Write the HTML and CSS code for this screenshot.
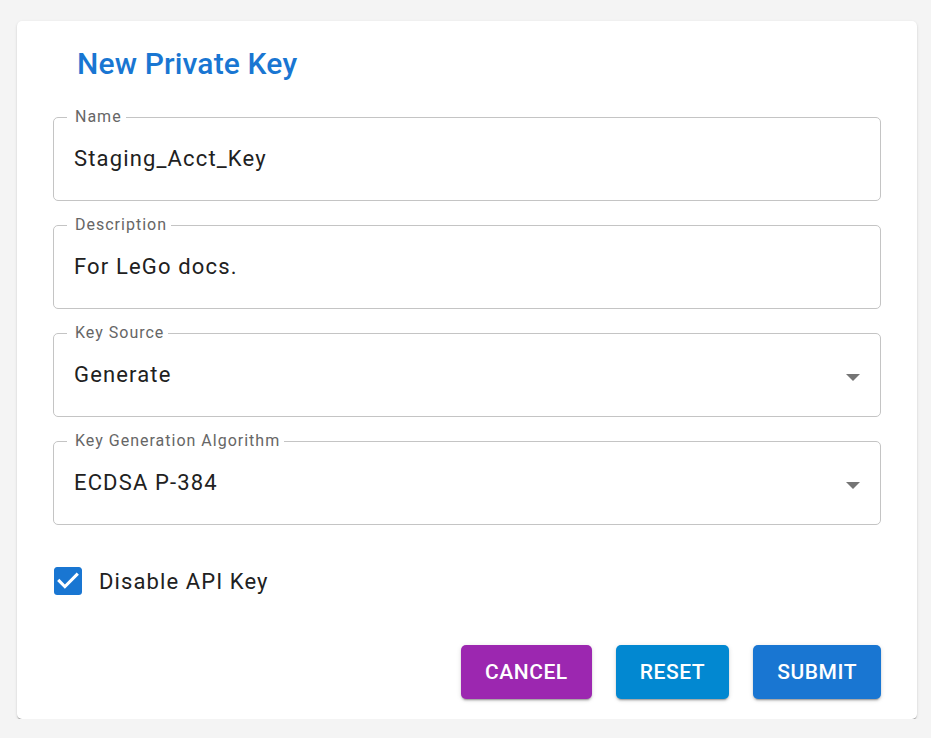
FILE: index.html
```html
<!DOCTYPE html>
<html lang="en">
<head>
<meta charset="utf-8">
<title>New Private Key</title>
<link rel="stylesheet" href="styles.css">
</head>
<body>
<div class="page">
  <form class="card">
    <h2 class="title">New Private Key</h2>
    <div class="fields">
      <fieldset class="field">
        <legend class="label">Name</legend>
        <div class="control"><span class="value">Staging_Acct_Key</span></div>
      </fieldset>
      <fieldset class="field">
        <legend class="label">Description</legend>
        <div class="control"><span class="value">For LeGo docs.</span></div>
      </fieldset>
      <fieldset class="field">
        <legend class="label">Key Source</legend>
        <div class="control"><span class="value">Generate</span>
          <svg class="arrow" viewBox="7 10 10 5" width="14" height="7"><path d="M7 10l5 5 5-5z"/></svg>
        </div>
      </fieldset>
      <fieldset class="field">
        <legend class="label">Key Generation Algorithm</legend>
        <div class="control"><span class="value">ECDSA P-384</span>
          <svg class="arrow" viewBox="7 10 10 5" width="14" height="7"><path d="M7 10l5 5 5-5z"/></svg>
        </div>
      </fieldset>
    </div>
    <label class="check-row">
      <span class="checkbox">
        <svg viewBox="3 3 18 18" width="28" height="28"><path d="M19 3H5c-1.11 0-2 .9-2 2v14c0 1.1.89 2 2 2h14c1.11 0 2-.9 2-2V5c0-1.1-.89-2-2-2zm-9 14l-5-5 1.41-1.41L10 14.17l7.59-7.59L19 8l-9 9z"/></svg>
      </span>
      <span class="check-label">Disable API Key</span>
    </label>
    <div class="actions">
      <button type="button" class="btn btn-cancel">Cancel</button>
      <button type="button" class="btn btn-reset">Reset</button>
      <button type="button" class="btn btn-submit">Submit</button>
    </div>
  </form>
</div>
</body>
</html>
```
FILE: styles.css
```css
html, body {
  margin: 0;
  padding: 0;
  background: #f4f4f4;
  font-family: Roboto, "Liberation Sans", sans-serif;
}
.page {
  padding: 21px 14px 0 17px;
}
.card {
  background: #fff;
  border-radius: 5px;
  box-shadow: 0 2px 1px -1px rgba(0,0,0,0.2), 0 1px 1px 0 rgba(0,0,0,0.14), 0 1px 3px 0 rgba(0,0,0,0.12);
  padding: 23px 36px 20px 36px;
  display: flex;
  flex-direction: column;
  height: 698px;
  box-sizing: border-box;
}
.title {
  margin: 0 0 0 24px;
  font-size: 30px;
  line-height: 40px;
  font-weight: 500;
  letter-spacing: 0.15px;
  color: #1976d2;
}
.fields {
  display: flex;
  flex-direction: column;
  gap: 16px;
  margin-top: 25px;
}
.field {
  margin: 0;
  border: 1px solid #c4c4c4;
  border-radius: 5px;
  padding: 22px 20px 29px 20px;
  min-width: 0;
}
.label {
  font-size: 16px;
  line-height: 16px;
  letter-spacing: 1px;
  color: #666;
  padding: 0 4px 0 8px;
  margin-left: -7px;
}
.control {
  display: flex;
  align-items: center;
  justify-content: space-between;
  height: 24px;
}
.value {
  font-size: 22px;
  line-height: 24px;
  letter-spacing: 1.15px;
  color: #212121;
}
.arrow {
  fill: #757575;
  margin-top: 5px;
}
.check-row {
  display: flex;
  align-items: center;
  margin-top: 42px;
  margin-left: 1px;
  height: 28px;
}
.checkbox {
  display: flex;
  width: 28px;
  height: 28px;
}
.checkbox svg {
  fill: #1976d2;
}
.check-label {
  margin-left: 17px;
  font-size: 22px;
  letter-spacing: 1.1px;
  color: #212121;
}
.actions {
  display: flex;
  justify-content: flex-end;
  gap: 24px;
  margin-top: auto;
}
.btn {
  border: none;
  border-radius: 5px;
  height: 54px;
  padding: 0 24px;
  font-family: Roboto, "Liberation Sans", sans-serif;
  font-size: 21px;
  font-weight: 500;
  letter-spacing: 0.55px;
  text-transform: uppercase;
  color: #fff;
  box-shadow: 0 3px 1px -2px rgba(0,0,0,0.2), 0 2px 2px 0 rgba(0,0,0,0.14), 0 1px 5px 0 rgba(0,0,0,0.12);
}
.btn-cancel { background: #9c27b0; }
.btn-reset { background: #0288d1; }
.btn-submit { background: #1976d2; }
```
